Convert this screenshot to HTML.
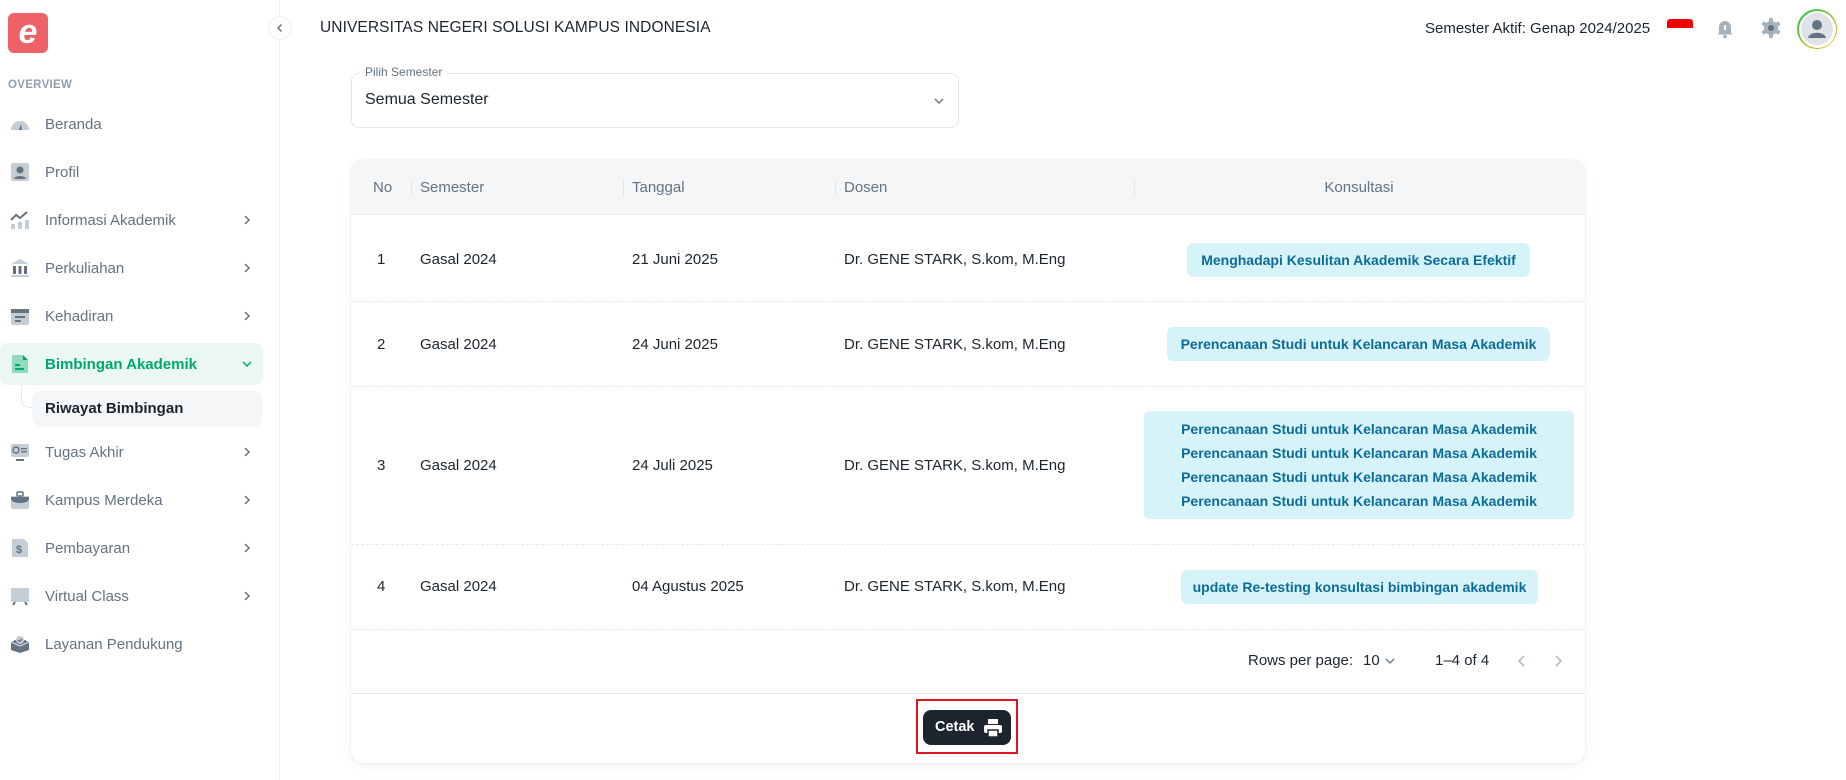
<!DOCTYPE html>
<html><head><meta charset="utf-8"><style>
*{box-sizing:border-box;margin:0;padding:0}
body{width:1846px;height:780px;overflow:hidden;background:#fff;font-family:"Liberation Sans",sans-serif;color:#1c252e;position:relative}
.abs{position:absolute}
.side{left:0;top:0;width:280px;height:780px;border-right:1px solid #eef0f2}
.logo{left:8px;top:13px;width:40px;height:40px;background:#ee6167;border-radius:6px;color:#fff;font-weight:bold;font-size:34px;line-height:38px;text-align:center;font-style:italic}
.ov{left:8px;top:79px;font-size:11.5px;font-weight:bold;color:#919eab;letter-spacing:.3px}
.mi{left:0;width:263px;height:40px;display:flex;align-items:center;font-size:15px;color:#637381}
.mi .ic{position:absolute;left:10px;top:10px;width:20px;height:20px}
.mi .tx{position:absolute;left:45px}
.mi .ch{position:absolute;left:241px;top:14px;width:12px;height:12px}
.act{background:#ebf7f3;border-radius:8px;color:#00a76f;font-weight:bold}
.th{font-size:15px;color:#637381}
.td{font-size:15px;color:#1c252e}
.badge{background:#d6f3fa;color:#0c6c98;font-weight:bold;font-size:14px;border-radius:6px;text-align:center;line-height:24px}
.sep{width:1px;height:16px;background:#e4e7ea;top:180px}
.rl{left:351px;width:1234px;height:0;border-top:1px dashed #e6e9ec}
</style></head><body>
<div class="abs side"></div>
<div class="abs logo">e</div>
<div class="abs" style="left:268px;top:16px;width:24px;height:24px;border:1px solid #eceff2;border-radius:50%;background:#fff"><svg width="22" height="22" viewBox="0 0 22 22"><path d="M12.5 7.5 9 11l3.5 3.5" fill="none" stroke="#637381" stroke-width="1.5"/></svg></div>
<div class="abs ov">OVERVIEW</div>

<div class="abs mi" style="top:104px"><svg class="ic" viewBox="0 0 20 20"><path d="M1 16a9 9 0 0 1 18 0z" fill="#c4cdd5"/><path d="M9 16l2-6 1 6z" fill="#637381"/></svg><span class="tx">Beranda</span></div>
<div class="abs mi" style="top:152px"><svg class="ic" viewBox="0 0 20 20"><rect x="1" y="1" width="18" height="18" rx="2" fill="#c4cdd5"/><circle cx="10" cy="8" r="3.5" fill="#637381"/><path d="M4 17c1-4 11-4 12 0z" fill="#637381"/></svg><span class="tx">Profil</span></div>
<div class="abs mi" style="top:200px"><svg class="ic" viewBox="0 0 20 20"><rect x="1" y="14" width="4" height="5" fill="#c4cdd5"/><rect x="8" y="12" width="4" height="7" fill="#c4cdd5"/><rect x="15" y="10" width="4" height="9" fill="#c4cdd5"/><path d="M1 10l5-5 4 3 7-6" fill="none" stroke="#637381" stroke-width="2"/></svg><span class="tx">Informasi Akademik</span><svg class="ch" viewBox="0 0 12 12"><path d="M4 2l4 4-4 4" fill="none" stroke="#637381" stroke-width="1.5"/></svg></div>
<div class="abs mi" style="top:248px"><svg class="ic" viewBox="0 0 20 20"><path d="M1 6l9-5 9 5z" fill="#c4cdd5"/><rect x="3" y="8" width="3" height="8" fill="#637381"/><rect x="8.5" y="8" width="3" height="8" fill="#637381"/><rect x="14" y="8" width="3" height="8" fill="#637381"/><rect x="1" y="17" width="18" height="2" fill="#c4cdd5"/></svg><span class="tx">Perkuliahan</span><svg class="ch" viewBox="0 0 12 12"><path d="M4 2l4 4-4 4" fill="none" stroke="#637381" stroke-width="1.5"/></svg></div>
<div class="abs mi" style="top:296px"><svg class="ic" viewBox="0 0 20 20"><rect x="1" y="3" width="18" height="16" rx="2" fill="#c4cdd5"/><rect x="1" y="3" width="18" height="4" fill="#637381"/><rect x="5" y="10" width="10" height="2" fill="#637381"/><rect x="5" y="14" width="6" height="2" fill="#637381"/></svg><span class="tx">Kehadiran</span><svg class="ch" viewBox="0 0 12 12"><path d="M4 2l4 4-4 4" fill="none" stroke="#637381" stroke-width="1.5"/></svg></div>
<div class="abs mi act" style="top:343px;height:42px"><svg class="ic" viewBox="0 0 20 20" style="top:11px"><path d="M2 1h11l5 5v13H2z" fill="#8fd9bd"/><path d="M13 1l5 5h-5z" fill="#00a76f"/><rect x="5" y="10" width="5" height="2" fill="#00a76f"/><rect x="5" y="14" width="9" height="2" fill="#00a76f"/></svg><span class="tx">Bimbingan Akademik</span><svg class="ch" viewBox="0 0 12 12" style="top:15px"><path d="M2 4l4 4 4-4" fill="none" stroke="#00a76f" stroke-width="1.5"/></svg></div>
<div class="abs" style="left:21px;top:385px;width:12px;height:23px;border-left:1.5px solid #e4e7ea;border-bottom:1.5px solid #e4e7ea;border-bottom-left-radius:8px"></div>
<div class="abs" style="left:32px;top:391px;width:231px;height:35px;background:#f4f6f8;border-radius:8px;font-size:15px;font-weight:bold;color:#1c252e;padding-left:13px;line-height:35px">Riwayat Bimbingan</div>
<div class="abs mi" style="top:432px"><svg class="ic" viewBox="0 0 20 20"><rect x="1" y="2" width="18" height="13" rx="2" fill="#c4cdd5"/><circle cx="6" cy="8" r="3" fill="none" stroke="#637381" stroke-width="1.4"/><rect x="11" y="6" width="6" height="1.4" fill="#637381"/><rect x="11" y="9" width="6" height="1.4" fill="#637381"/><rect x="6" y="17" width="8" height="2" fill="#637381"/></svg><span class="tx">Tugas Akhir</span><svg class="ch" viewBox="0 0 12 12"><path d="M4 2l4 4-4 4" fill="none" stroke="#637381" stroke-width="1.5"/></svg></div>
<div class="abs mi" style="top:480px"><svg class="ic" viewBox="0 0 20 20"><rect x="1" y="6" width="18" height="13" rx="2" fill="#c4cdd5"/><path d="M1 9a9 4 0 0 0 18 0V7H1z" fill="#637381"/><rect x="7" y="2" width="6" height="4" rx="1" fill="none" stroke="#637381" stroke-width="1.5"/></svg><span class="tx">Kampus Merdeka</span><svg class="ch" viewBox="0 0 12 12"><path d="M4 2l4 4-4 4" fill="none" stroke="#637381" stroke-width="1.5"/></svg></div>
<div class="abs mi" style="top:528px"><svg class="ic" viewBox="0 0 20 20"><path d="M2 1h12l4 4v14H2z" fill="#c4cdd5"/><text x="6" y="15" font-size="11" font-weight="bold" fill="#637381" font-family="Liberation Sans">$</text></svg><span class="tx">Pembayaran</span><svg class="ch" viewBox="0 0 12 12"><path d="M4 2l4 4-4 4" fill="none" stroke="#637381" stroke-width="1.5"/></svg></div>
<div class="abs mi" style="top:576px"><svg class="ic" viewBox="0 0 20 20"><rect x="1" y="2" width="18" height="14" rx="1" fill="#c4cdd5"/><path d="M3 19l2-3M17 19l-2-3" stroke="#637381" stroke-width="2"/></svg><span class="tx">Virtual Class</span><svg class="ch" viewBox="0 0 12 12"><path d="M4 2l4 4-4 4" fill="none" stroke="#637381" stroke-width="1.5"/></svg></div>
<div class="abs mi" style="top:624px"><svg class="ic" viewBox="0 0 20 20"><path d="M1 8l9-4 9 4v8l-9 3-9-3z" fill="#637381"/><path d="M1 8l9 4 9-4" fill="none" stroke="#c4cdd5" stroke-width="1.3"/><circle cx="10" cy="6" r="4" fill="#c4cdd5"/><path d="M8 6l1.5 1.5L12 5" fill="none" stroke="#637381" stroke-width="1.3"/></svg><span class="tx">Layanan Pendukung</span></div>

<div class="abs" style="left:320px;top:19px;font-size:15.5px;font-weight:500;color:#1c252e;letter-spacing:.1px">UNIVERSITAS NEGERI SOLUSI KAMPUS INDONESIA</div>
<div class="abs" style="left:1425px;top:20px;font-size:15px;color:#1c252e">Semester Aktif: Genap 2024/2025</div>
<div class="abs" style="left:1667px;top:19px;width:26px;height:18px;overflow:hidden;border-radius:3px"><div style="height:9px;background:#e00"></div><div style="height:9px;background:#fff"></div></div>
<svg class="abs" style="left:1714px;top:17px" width="22" height="22" viewBox="0 0 22 22"><path d="M5 16V10a6 6 0 0 1 12 0v6l1.5 1.5h-15z" fill="#a7b1bc"/><rect x="10" y="8" width="2" height="5" rx="1" fill="#fff"/><circle cx="11" cy="19.5" r="1.8" fill="#a7b1bc"/></svg>
<svg class="abs" style="left:1760px;top:17px" width="22" height="22" viewBox="0 0 22 22"><g fill="#a7b1bc" transform="translate(11 11)"><circle r="7"/><g id="t"><rect x="-2" y="-10" width="4" height="5" rx="1"/></g><use href="#t" transform="rotate(60)"/><use href="#t" transform="rotate(120)"/><use href="#t" transform="rotate(180)"/><use href="#t" transform="rotate(240)"/><use href="#t" transform="rotate(300)"/></g><circle cx="11" cy="11" r="3" fill="#637381"/></svg>
<div class="abs" style="left:1797px;top:9px;width:40px;height:40px;border-radius:50%;background:linear-gradient(135deg,#22c55e,#f5b800)"></div>
<div class="abs" style="left:1798.5px;top:10.5px;width:37px;height:37px;border-radius:50%;background:#fff"></div>
<div class="abs" style="left:1801px;top:13px;width:32px;height:32px;border-radius:50%;background:#dfe3e8;overflow:hidden"><svg width="32" height="32" viewBox="0 0 32 32"><circle cx="16" cy="12" r="5" fill="#637381"/><path d="M7 25c1-7 17-7 18 0z" fill="#637381"/></svg></div>

<div class="abs" style="left:351px;top:73px;width:608px;height:55px;border:1px solid #e4e7ea;border-radius:8px"></div>
<div class="abs" style="left:360px;top:65px;padding:0 5px;background:#fff;font-size:12px;color:#637381">Pilih Semester</div>
<div class="abs" style="left:365px;top:91px;font-size:16px;color:#1c252e">Semua Semester</div>
<svg class="abs" style="left:932px;top:94px" width="14" height="14" viewBox="0 0 14 14"><path d="M3 5l4 4 4-4" fill="none" stroke="#637381" stroke-width="1.4"/></svg>

<div class="abs" style="left:351px;top:160px;width:1234px;height:603px;border-radius:12px;background:#fff;box-shadow:0 0 2px rgba(145,158,171,.25),0 6px 16px -4px rgba(145,158,171,.15);overflow:hidden">
<div style="height:55px;background:#f4f6f8;border-bottom:1px solid #e6e9ec"></div>
</div>
<div class="abs th" style="left:373px;top:179px">No</div>
<div class="abs sep" style="left:411px"></div>
<div class="abs th" style="left:420px;top:179px">Semester</div>
<div class="abs sep" style="left:623px"></div>
<div class="abs th" style="left:632px;top:179px">Tanggal</div>
<div class="abs sep" style="left:835px"></div>
<div class="abs th" style="left:844px;top:179px">Dosen</div>
<div class="abs sep" style="left:1134px"></div>
<div class="abs th" style="left:1134px;width:450px;text-align:center;top:179px">Konsultasi</div>

<div class="abs td" style="left:377px;top:251px">1</div><div class="abs td" style="left:420px;top:251px">Gasal 2024</div><div class="abs td" style="left:632px;top:251px">21 Juni 2025</div><div class="abs td" style="left:844px;top:251px">Dr. GENE STARK, S.kom, M.Eng</div>
<div class="abs badge" style="left:1187px;top:243px;width:343px;height:34px;line-height:34px">Menghadapi Kesulitan Akademik Secara Efektif</div>
<div class="abs rl" style="top:301px"></div>
<div class="abs td" style="left:377px;top:336px">2</div><div class="abs td" style="left:420px;top:336px">Gasal 2024</div><div class="abs td" style="left:632px;top:336px">24 Juni 2025</div><div class="abs td" style="left:844px;top:336px">Dr. GENE STARK, S.kom, M.Eng</div>
<div class="abs badge" style="left:1167px;top:327px;width:383px;height:34px;line-height:34px">Perencanaan Studi untuk Kelancaran Masa Akademik</div>
<div class="abs rl" style="top:386px"></div>
<div class="abs td" style="left:377px;top:457px">3</div><div class="abs td" style="left:420px;top:457px">Gasal 2024</div><div class="abs td" style="left:632px;top:457px">24 Juli 2025</div><div class="abs td" style="left:844px;top:457px">Dr. GENE STARK, S.kom, M.Eng</div>
<div class="abs badge" style="left:1144px;top:411px;width:430px;height:108px;padding-top:6px">Perencanaan Studi untuk Kelancaran Masa Akademik<br>Perencanaan Studi untuk Kelancaran Masa Akademik<br>Perencanaan Studi untuk Kelancaran Masa Akademik<br>Perencanaan Studi untuk Kelancaran Masa Akademik</div>
<div class="abs rl" style="top:544px"></div>
<div class="abs td" style="left:377px;top:578px">4</div><div class="abs td" style="left:420px;top:578px">Gasal 2024</div><div class="abs td" style="left:632px;top:578px">04 Agustus 2025</div><div class="abs td" style="left:844px;top:578px">Dr. GENE STARK, S.kom, M.Eng</div>
<div class="abs badge" style="left:1181px;top:570px;width:357px;height:34px;line-height:34px">update Re-testing konsultasi bimbingan akademik</div>
<div class="abs rl" style="top:629px"></div>

<div class="abs" style="left:1248px;top:652px;font-size:15px;color:#1c252e">Rows per page:</div>
<div class="abs" style="left:1363px;top:652px;font-size:15px;color:#1c252e">10</div>
<svg class="abs" style="left:1384px;top:655px" width="12" height="12" viewBox="0 0 12 12"><path d="M2 4l4 4 4-4" fill="none" stroke="#637381" stroke-width="1.3"/></svg>
<div class="abs" style="left:1435px;top:652px;font-size:15px;color:#1c252e">1–4 of 4</div>
<svg class="abs" style="left:1515px;top:653px" width="14" height="16" viewBox="0 0 14 16"><path d="M9 3L4 8l5 5" fill="none" stroke="#b5bec7" stroke-width="1.6"/></svg>
<svg class="abs" style="left:1551px;top:653px" width="14" height="16" viewBox="0 0 14 16"><path d="M5 3l5 5-5 5" fill="none" stroke="#b5bec7" stroke-width="1.6"/></svg>
<div class="abs" style="left:351px;top:693px;width:1234px;border-top:1px solid #e6e9ec"></div>

<div class="abs" style="left:916px;top:699px;width:102px;height:55px;border:2px solid #e0141e"></div>
<div class="abs" style="left:923px;top:710px;width:88px;height:35px;background:#1c252e;border-radius:8px;color:#fff;font-weight:bold;font-size:14.5px;line-height:35px;padding-left:12px">Cetak</div>
<svg class="abs" style="left:983px;top:718px" width="20" height="20" viewBox="0 0 20 20"><rect x="5" y="1" width="10" height="5" fill="#fff"/><rect x="1" y="7" width="18" height="8" rx="2" fill="#fff"/><rect x="5" y="12" width="10" height="7" fill="#fff" stroke="#1c252e" stroke-width="1.5"/></svg>
</body></html>
